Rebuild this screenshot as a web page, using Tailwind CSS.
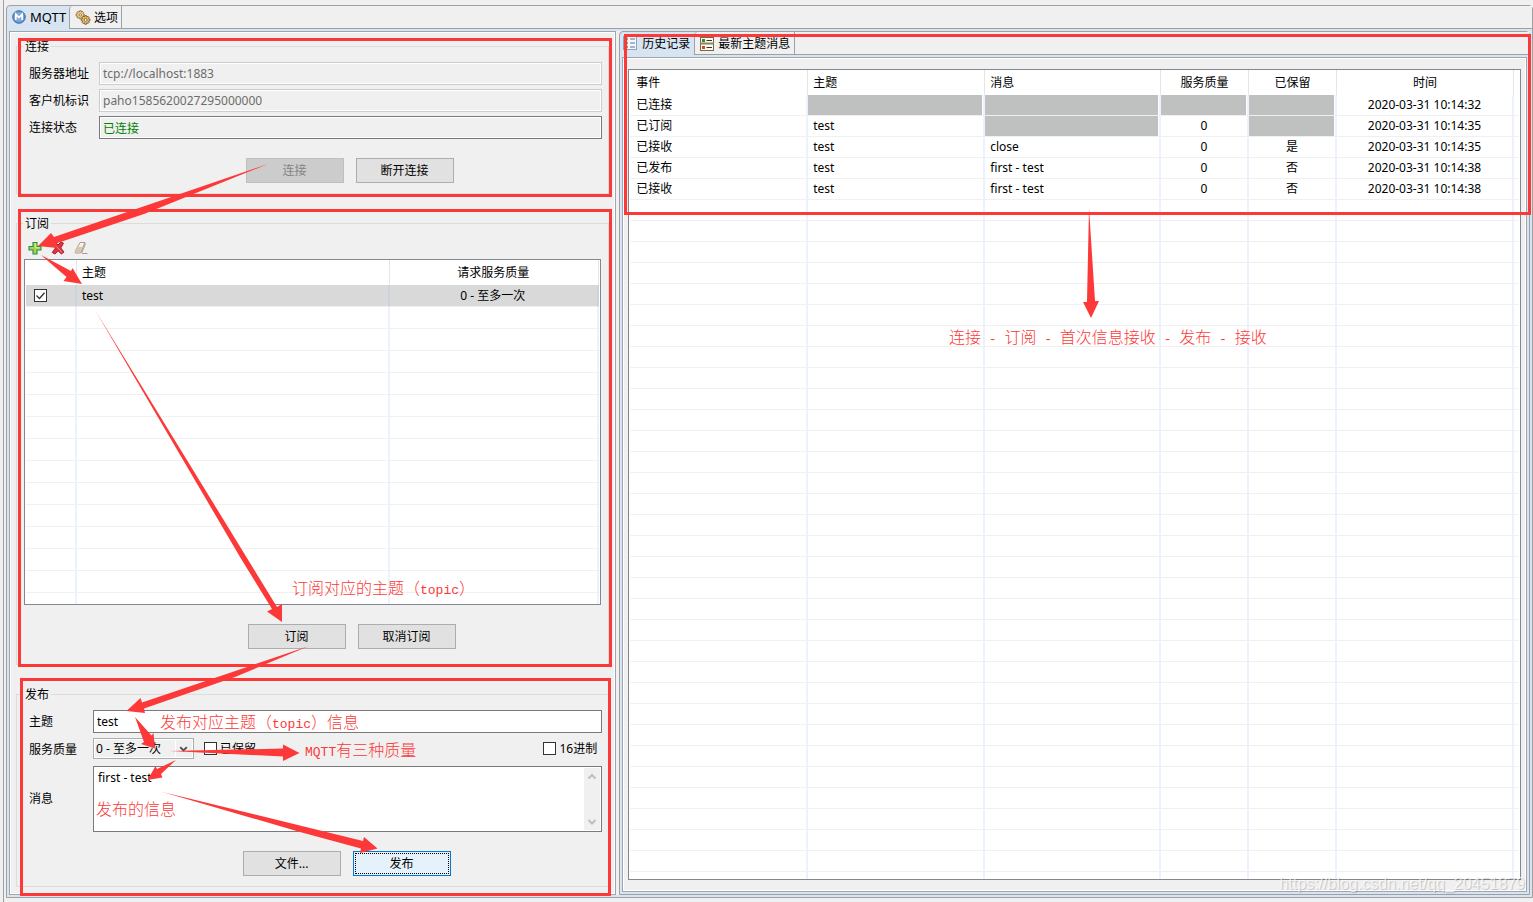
<!DOCTYPE html>
<html lang="zh-CN">
<head>
<meta charset="utf-8">
<title>MQTT</title>
<meta name="viewport" content="width=device-width, initial-scale=1">
<script src="https://cdn.jsdelivr.net/npm/@tailwindcss/browser@4"></script>
</head>
<body class="relative flex h-screen overflow-hidden bg-[#f0f0f0] pl-[3px] font-['Noto_Sans','Noto_Sans_CJK_SC',sans-serif] text-xs leading-4 text-black">
<div class="w-[3px] shrink-0 border-l border-[#a0a0a0]"></div>

<main class="mt-[5px] mb-1 flex min-w-0 flex-1 flex-col rounded-t border border-[#a0a0a0] bg-[#d7e4f2]">
  <div role="tablist" class="flex h-[23px] shrink-0">
    <button role="tab" aria-selected="true" class="flex w-[62px] items-center gap-1 pb-[2px] pl-[5px]">
      <svg class="size-[14px] shrink-0" viewBox="0 0 14 14"><circle cx="7" cy="7" r="6.3" fill="#5b8fc7" stroke="#4674ab"/><circle cx="7" cy="7" r="5" fill="#7fa9d6"/><path d="M3.8 10V4.2L7 7.6l3.2-3.4V10" fill="none" stroke="#fff" stroke-width="1.7"/></svg>
      <span class="text-[13px]">MQTT</span>
    </button>
    <button role="tab" aria-selected="false" class="flex w-[53px] items-center gap-[3px] rounded-tl border-x border-b border-[#a0a0a0] bg-[#f0f0f0] pt-[2px] pl-[5px]">
      <svg class="size-4 shrink-0" viewBox="0 0 16 16"><g fill="#f3d48c" stroke="#8a6a3c" stroke-width=".9"><path d="M4.6.8h1.6l.3 1.3 1.2-.6 1 1.1-.7 1.1 1.2.5v1.4l-1.3.4.5 1.2-1 1-1.2-.6-.4 1.2H4.5l-.4-1.3-1.2.7-1.1-1.1.7-1.1L1 5.6V4.2l1.4-.4-.7-1.2 1.1-1 1.3.6z"/><circle cx="5.3" cy="4.9" r="1.2" fill="#fff"/></g><g fill="#e9bf68" stroke="#7b5a2e" stroke-width=".9"><path d="M9.8 5.6h1.6l.4 1.4 1.3-.7 1.1 1.1-.7 1.3 1.5.4v1.6l-1.5.4.7 1.3-1.1 1.1-1.3-.7-.4 1.5H9.800l-.4-1.500-1.300.7L7 12.400l.7-1.300-1.500-.4V9.100l1.500-.4L7 7.400l1.100-1.100 1.300.7z"/><circle cx="10.600" cy="9.900" r="1.500" fill="#fff"/></g></svg>
      <span>选项</span>
    </button>
    <div class="flex-1 border-b border-[#a0a0a0] bg-[#f0f0f0]"></div>
  </div>

  <div class="mx-[2px] my-[2px] grid min-h-0 flex-1 grid-cols-[2fr_3fr] gap-[3px] bg-[#f0f0f0]">
    <!-- Connection, subscription and publication forms -->
    <div class="min-h-0 min-w-0 border border-[#a0a4ac]">
      <div class="flex h-full flex-col gap-[21px] border border-white px-[5px] pt-[5px] pb-[6px]">
        <fieldset class="border border-[#dcdcdc] pr-[6px] pb-[10px] pl-3">
          <legend class="-ml-[6px] px-[2px] pt-[2px] leading-[14px]">连接</legend>
          <div class="grid grid-cols-[70px_1fr] items-center gap-y-1 pt-2">
            <label for="server">服务器地址</label>
            <input id="server" disabled value="tcp://localhost:1883" class="h-[23px] min-w-0 border border-[#ccc] bg-[#f0f0f0] px-[3px] text-[#6d6d6d] inset-ring inset-ring-white">
            <label for="client">客户机标识</label>
            <input id="client" disabled value="paho1585620027295000000" class="h-[23px] min-w-0 border border-[#ccc] bg-[#f0f0f0] px-[3px] text-[#6d6d6d] inset-ring inset-ring-white">
            <label for="state">连接状态</label>
            <input id="state" readonly value="已连接" class="h-[23px] min-w-0 border border-[#7a7a7a] bg-[#f0f0f0] px-[3px] text-[#008000] inset-ring inset-ring-white">
          </div>
          <div class="mt-[19px] flex justify-center gap-3 pl-[68px]">
            <button disabled class="h-[25px] w-[98px] border border-[#bfbfbf] bg-[#ccc] text-[#838383]">连接</button>
            <button class="h-[25px] w-[98px] border border-[#adadad] bg-[#e1e1e1]">断开连接</button>
          </div>
        </fieldset>

        <fieldset class="flex min-h-0 flex-1 flex-col border border-[#dcdcdc] px-[7px] pb-[15px]">
          <legend class="-ml-px px-[2px] pt-[2px] leading-[14px]">订阅</legend>
          <div class="mt-[9px] flex h-[19px] shrink-0 gap-[7px] pl-[3px]">
            <button aria-label="添加" class="size-4"><svg class="size-4" viewBox="0 0 16 16"><path d="M6 2.500h4v4h4v3.500h-4v4H6v-4H2V6.500h4z" fill="#a5d34c" stroke="#2f8a45" stroke-width="1.100"/><path d="M7.200 3.800h1.500v4h4" fill="none" stroke="#dff09a"/></svg></button>
            <button aria-label="删除" class="size-4"><svg class="size-4" viewBox="0 0 16 16"><path d="M3 2.500l2.500-.5L8 5l3-3 2.500 1.200L10.800 8l3.200 4-2.500 2-3.300-3L5 14l-2.800-1.500L5.500 8z" fill="#e2333f" stroke="#ac1c2c"/><path d="M4 3.500l8 9" stroke="#f4848a"/></svg></button>
            <button aria-label="清除" class="size-4"><svg class="size-4" viewBox="0 0 16 16"><path d="M7 2.500h5l-4.500 10.500H2.200l.3-2.500z" fill="#f6f2ec" stroke="#ad9d87"/><path d="M4.200 6.800h5L6.900 12.600H2.400v-2z" fill="#d3c6b2"/><path d="M9 13.500h5.500M12 3v2L8.500 13" fill="none" stroke="#ad9d87"/></svg></button>
          </div>
          <div class="min-h-0 flex-1 border border-[#828790] bg-white pl-px">
            <table class="h-full w-full table-fixed border-separate border-spacing-0">
              <colgroup><col class="w-[51px]"><col><col class="w-[209px]"><col class="w-px"></colgroup>
              <thead>
                <tr class="h-[25px]">
                  <th aria-label="启用" class="border-r border-[#e5e5e5] p-0"></th>
                  <th class="border-r border-[#e5e5e5] p-0 pl-[5px] text-left font-normal">主题</th>
                  <th class="border-r border-[#e5e5e5] p-0 pr-[2px] font-normal">请求服务质量</th>
                  <th class="p-0"></th>
                </tr>
              </thead>
              <tbody>
                <tr class="h-[22px]">
                  <td class="border-r-2 border-b border-r-[#ccd3da] border-b-[#f0f0f0] bg-[#d9d9d9] p-0 pl-2">
                    <span class="relative block size-[13px]">
                      <input type="checkbox" checked aria-label="启用 test" class="block size-[13px] appearance-none border border-[#333] bg-white">
                      <svg class="pointer-events-none absolute inset-0 size-[13px]" viewBox="0 0 13 13"><path d="M2.500 6.500l3 3L10.500 3.800" fill="none" stroke="#333" stroke-width="1.300"/></svg>
                    </span>
                  </td>
                  <td class="border-r-2 border-b border-r-[#ccd3da] border-b-[#f0f0f0] bg-[#d9d9d9] p-0 pl-[5px]">test</td>
                  <td class="border-r-2 border-b border-r-[#ccd3da] border-b-[#f0f0f0] bg-[#d9d9d9] p-0 pr-[2px] text-center">0 - 至多一次</td>
                  <td class="p-0"></td>
                </tr>
                <tr class="bg-[repeating-linear-gradient(to_bottom,transparent_0_21px,#f0f0f0_21px_22px)]">
                  <td class="border-r-2 border-[#ecf2fb] p-0">&nbsp;</td>
                  <td class="border-r-2 border-[#ecf2fb] p-0"></td>
                  <td class="border-r-2 border-[#ecf2fb] p-0"></td>
                  <td class="p-0"></td>
                </tr>
              </tbody>
            </table>
          </div>
          <div class="mt-[19px] flex shrink-0 justify-center gap-3 pl-[78px]">
            <button class="h-[25px] w-[98px] border border-[#adadad] bg-[#e1e1e1]">订阅</button>
            <button class="h-[25px] w-[98px] border border-[#adadad] bg-[#e1e1e1]">取消订阅</button>
          </div>
        </fieldset>

        <fieldset class="border border-[#dcdcdc] pr-[6px] pb-[10px] pl-3">
          <legend class="-ml-[6px] px-[2px] pt-[2px] leading-[14px]">发布</legend>
          <div class="grid grid-cols-[64px_1fr] items-center pt-2">
            <label for="topic">主题</label>
            <input id="topic" value="test" class="h-[23px] min-w-0 border border-[#7a7a7a] bg-white px-[3px]">
            <label for="qos">服务质量</label>
            <div class="mt-[5px] mb-[7px] flex items-center">
              <div class="relative h-[21px] w-[101px]">
                <select id="qos" class="size-full appearance-none border border-[#adadad] bg-[#f0f0f0] pl-[2px] inset-ring inset-ring-white"><option>0 - 至多一次</option><option>1 - 至少一次</option><option>2 - 刚好一次</option></select>
                <svg class="pointer-events-none absolute top-[2px] right-[2px] h-[17px] w-[17px] border-l border-white" viewBox="0 0 17 17"><path d="M4.500 7l3.500 3.500L11.500 7" fill="none" stroke="#505050" stroke-width="2"/></svg>
              </div>
              <label class="ml-[10px] flex items-center gap-[3px]"><input type="checkbox" class="size-[13px] appearance-none border border-[#333] bg-white">已保留</label>
              <label class="mr-[5px] ml-auto flex items-center gap-[3px]"><input type="checkbox" class="size-[13px] appearance-none border border-[#333] bg-white">16进制</label>
            </div>
            <label for="message">消息</label>
            <div class="flex h-[66px] border border-[#7a7a7a] bg-white p-px">
              <textarea id="message" class="min-w-0 flex-1 resize-none overflow-hidden bg-white py-[2px] pl-[3px] outline-none">first - test</textarea>
              <div class="flex w-4 shrink-0 flex-col justify-between bg-[#f0f0f0]">
                <svg class="h-[17px] w-4" viewBox="0 0 16 17"><path d="M4.500 10.500L8 7l3.500 3.500" fill="none" stroke="#bfbfbf" stroke-width="2"/></svg>
                <svg class="h-[17px] w-4" viewBox="0 0 16 17"><path d="M4.500 7L8 10.500 11.500 7" fill="none" stroke="#bfbfbf" stroke-width="2"/></svg>
              </div>
            </div>
          </div>
          <div class="mt-[19px] flex justify-center gap-3 pl-[62px]">
            <button class="h-[25px] w-[98px] border border-[#adadad] bg-[#e1e1e1]">文件...</button>
            <button class="h-[25px] w-[98px] border border-[#0078d7] bg-[#e5f1fb] p-px"><span class="flex size-full items-center justify-center border border-dotted border-black">发布</span></button>
          </div>
        </fieldset>
      </div>
    </div>

    <!-- Message history -->
    <div class="flex min-h-0 min-w-0 flex-col rounded-t border border-[#a0a0a0] bg-[#d7e4f2]">
      <div role="tablist" class="flex h-[23px] shrink-0">
        <button role="tab" aria-selected="true" class="flex w-[74px] items-center gap-1 pl-[3px]">
          <svg class="size-[15px] shrink-0" viewBox="0 0 15 15"><rect x=".5" y=".5" width="13" height="13" fill="#f4f8fd" stroke="#8fa3bf"/><g fill="#3f9a55"><circle cx="3.500" cy="3" r="1.400"/><circle cx="3.500" cy="7" r="1.400"/><circle cx="3.500" cy="11" r="1.400"/></g><path d="M7 3h5M7 7h5M7 11h5" stroke="#5c7396"/></svg>
          <span>历史记录</span>
        </button>
        <button role="tab" aria-selected="false" class="flex w-[101px] items-center gap-1 rounded-tl border-x border-b border-[#a0a0a0] bg-[#f0f0f0] pt-[2px] pl-[5px]">
          <svg class="size-[14px] shrink-0" viewBox="0 0 14 14"><rect x=".5" y=".5" width="13" height="13" fill="#fbf9ea" stroke="#6f6a4c"/><path d="M0 6.500h14" stroke="#8b8560" stroke-width="2"/><rect x="2" y="2" width="3" height="3" fill="#2e8b45"/><rect x="2" y="9" width="3" height="3" fill="#d8452b"/><path d="M6.500 3.500H12M6.500 10.500H12" stroke="#333"/></svg>
          <span>最新主题消息</span>
        </button>
        <div class="flex-1 border-b border-[#a0a0a0] bg-[#f0f0f0]"></div>
      </div>
      <div class="m-[2px] min-h-0 flex-1 border border-[#a0a4ac] bg-[#f0f0f0]">
        <div class="h-full border border-white px-1 py-[10px]">
          <div class="h-full border border-[#828790] bg-white px-px">
            <table class="h-full w-full table-fixed border-separate border-spacing-0">
              <colgroup><col class="w-[178px]"><col class="w-[177px]"><col><col class="w-[88px]"><col class="w-[88px]"><col class="w-[177px]"><col class="w-[5px]"></colgroup>
              <thead>
                <tr class="h-[25px] text-left">
                  <th class="border-r border-[#e5e5e5] p-0 pl-[6px] font-normal">事件</th>
                  <th class="border-r border-[#e5e5e5] p-0 pl-[5px] font-normal">主题</th>
                  <th class="border-r border-[#e5e5e5] p-0 pl-[5px] font-normal">消息</th>
                  <th class="border-r border-[#e5e5e5] p-0 text-center font-normal">服务质量</th>
                  <th class="border-r border-[#e5e5e5] p-0 text-center font-normal">已保留</th>
                  <th class="border-r border-[#e5e5e5] p-0 text-center font-normal">时间</th>
                  <th class="p-0"></th>
                </tr>
              </thead>
              <tbody class="[&_td]:border-r-[#ecf2fb] [&_td]:border-b-[#f0f0f0] [&_td:not(:last-child)]:border-r-2 [&_tr:not(:last-child)_td]:border-b">
                <tr class="h-[21px]"><td class="p-0 pl-[6px]">已连接</td><td class="p-0 pr-px"><div class="h-5 bg-[#bfc0c0]"></div></td><td class="p-0 pr-px"><div class="h-5 bg-[#bfc0c0]"></div></td><td class="p-0 pr-px"><div class="h-5 bg-[#bfc0c0]"></div></td><td class="p-0 pr-px"><div class="h-5 bg-[#bfc0c0]"></div></td><td class="p-0 text-center">2020-03-31 10:14:32</td><td class="p-0"></td></tr>
                <tr class="h-[21px]"><td class="p-0 pl-[6px]">已订阅</td><td class="p-0 pl-[5px]">test</td><td class="p-0 pr-px"><div class="h-5 bg-[#bfc0c0]"></div></td><td class="p-0 text-center">0</td><td class="p-0 pr-px"><div class="h-5 bg-[#bfc0c0]"></div></td><td class="p-0 text-center">2020-03-31 10:14:35</td><td class="p-0"></td></tr>
                <tr class="h-[21px]"><td class="p-0 pl-[6px]">已接收</td><td class="p-0 pl-[5px]">test</td><td class="p-0 pl-[5px]">close</td><td class="p-0 text-center">0</td><td class="p-0 text-center">是</td><td class="p-0 text-center">2020-03-31 10:14:35</td><td class="p-0"></td></tr>
                <tr class="h-[21px]"><td class="p-0 pl-[6px]">已发布</td><td class="p-0 pl-[5px]">test</td><td class="p-0 pl-[5px]">first - test</td><td class="p-0 text-center">0</td><td class="p-0 text-center">否</td><td class="p-0 text-center">2020-03-31 10:14:38</td><td class="p-0"></td></tr>
                <tr class="h-[21px]"><td class="p-0 pl-[6px]">已接收</td><td class="p-0 pl-[5px]">test</td><td class="p-0 pl-[5px]">first - test</td><td class="p-0 text-center">0</td><td class="p-0 text-center">否</td><td class="p-0 text-center">2020-03-31 10:14:38</td><td class="p-0"></td></tr>
                <tr class="bg-[repeating-linear-gradient(to_bottom,transparent_0_20px,#f0f0f0_20px_21px)]"><td class="p-0">&nbsp;</td><td class="p-0"></td><td class="p-0"></td><td class="p-0"></td><td class="p-0"></td><td class="p-0"></td><td class="p-0"></td></tr>
              </tbody>
            </table>
          </div>
        </div>
      </div>
    </div>
  </div>
</main>

<!-- Red annotations drawn over the window -->
<div class="pointer-events-none absolute inset-0 font-['Noto_Sans_CJK_SC',sans-serif] text-base leading-5 font-light whitespace-pre text-[#fc3838]">
  <svg class="absolute top-0 left-0" width="1533" height="902" viewBox="0 0 1533 902">
    <g fill="none" stroke="#fc3838" stroke-width="3">
      <rect x="19.500" y="39.500" width="591" height="156"/>
      <rect x="19.500" y="210.500" width="591" height="455"/>
      <rect x="21.500" y="679.500" width="588" height="215"/>
      <rect x="625.500" y="35.500" width="904" height="178"/>
    </g>
    <g fill="#fc3838">
      <path d="M268 164L54 237l-3-4-13 13 19 2-1-4.500L144 214z"/>
      <path d="M41 255l30 16 1.500-3L82 284l-18.500-3 3-4z"/>
      <path d="M95 310l182 297 5-3v18l-15-10.500 5-2.500L240 557z"/>
      <path d="M309 646l-167 56.500-1.500-4.500-14 13 18.500 2-1-4.500L235 677z"/>
      <path d="M135 717l16.500 18.500 2-2.500 1.500 15.500-14-4.500 3-2z"/>
      <path d="M170 751l113-2.500v-4l16.500 8.500-16.500 8v-4.500z"/>
      <path d="M176 760l-19 9-1.500-3-8 14 15-2.500-1.500-3.500z"/>
      <path d="M162.500 792L363 841l1-4 13.500 11.500L360 853l1-4.500L300 832z"/>
      <path d="M1089 208l-2 94h-4l8 16 8-17h-4z"/>
    </g>
  </svg>
  <p class="absolute top-[326px] left-[949px]">连接<span class="font-['Liberation_Mono'] text-[13px]"> - </span>订阅<span class="font-['Liberation_Mono'] text-[13px]"> - </span>首次信息接收<span class="font-['Liberation_Mono'] text-[13px]"> - </span>发布<span class="font-['Liberation_Mono'] text-[13px]"> - </span>接收</p>
  <p class="absolute top-[577px] left-[292px]">订阅对应的主题（<span class="font-['Liberation_Mono'] text-[13px]">topic</span>）</p>
  <p class="absolute top-[711px] left-[160px]">发布对应主题（<span class="font-['Liberation_Mono'] text-[13px]">topic</span>）信息</p>
  <p class="absolute top-[739px] left-[305px]"><span class="font-['Liberation_Mono'] text-[13px]">MQTT</span>有三种质量</p>
  <p class="absolute top-[798px] left-[96px]">发布的信息</p>
</div>
<p class="pointer-events-none absolute right-2 bottom-2 font-['Liberation_Sans',sans-serif] text-base leading-5 text-white/70 [text-shadow:1px_1px_1px_rgba(0,0,0,0.2)]">https://blog.csdn.net/qq_20451879</p>
</body>
</html>
